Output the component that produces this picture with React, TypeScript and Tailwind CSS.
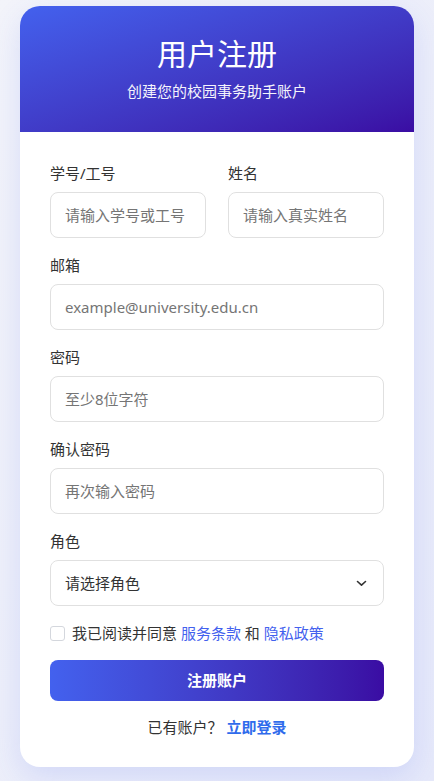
import React from "react";

const font = { fontFamily: '"Noto Sans", "Noto Sans CJK SC", sans-serif' };

function Field({ label, placeholder, type = "text" }: { label: string; placeholder: string; type?: string }) {
  return (
    <div className="flex flex-col">
      <label className="text-[15px] leading-[22px] text-[#333333] mb-2">{label}</label>
      <input
        type={type}
        placeholder={placeholder}
        className="h-[46px] w-full rounded-lg border border-[#e0e0e0] bg-white pl-[14px] pr-3 text-[15px] text-[#333] placeholder:text-[#757575] outline-none"
        style={font}
      />
    </div>
  );
}

export default function App() {
  return (
    <div className="min-h-screen w-full bg-gradient-to-br from-[#f3f4fa] to-[#e6e9fa] pt-[6px] pb-[13px]" style={font}>
      <div className="mx-[20px] overflow-hidden rounded-[20px] bg-white shadow-[0_10px_30px_rgba(67,97,238,0.15)]">
        <div className="bg-gradient-to-br from-[#4361ee] to-[#3a0ca3] pt-[30px] pb-[30px] text-center text-white">
          <h1 className="text-[30px] leading-[36px] font-normal">用户注册</h1>
          <p className="mt-2 text-[15px] leading-[22px] opacity-95">创建您的校园事务助手账户</p>
        </div>
        <div className="px-[30px] pt-[30px] pb-[30px] flex flex-col gap-4">
          <div className="grid grid-cols-2 gap-[22px]">
            <Field label="学号/工号" placeholder="请输入学号或工号" />
            <Field label="姓名" placeholder="请输入真实姓名" />
          </div>
          <Field label="邮箱" placeholder="example@university.edu.cn" type="email" />
          <Field label="密码" placeholder="至少8位字符" type="password" />
          <Field label="确认密码" placeholder="再次输入密码" type="password" />
          <div className="flex flex-col">
            <label className="text-[15px] leading-[22px] text-[#333333] mb-2">角色</label>
            <div className="relative h-[46px] w-full rounded-lg border border-[#e0e0e0] bg-white flex items-center pl-[14px] pr-[16px] justify-between">
              <span className="text-[15px] text-[#333]">请选择角色</span>
              <svg width="11" height="7" viewBox="0 0 11 7" fill="none">
                <path d="M1.5 1.5L5.5 5.2L9.5 1.5" stroke="#333" strokeWidth="1.6" strokeLinecap="round" strokeLinejoin="round" />
              </svg>
            </div>
          </div>
          <div className="flex items-center h-[22px]">
            <span className="inline-block h-[15px] w-[15px] rounded-[3px] border border-[#d4d7dd] bg-white" />
            <span className="ml-[7px] text-[15px] leading-[22px] text-[#333]">
              我已阅读并同意 <span className="text-[#4361ee]">服务条款</span> 和 <span className="text-[#4361ee]">隐私政策</span>
            </span>
          </div>
          <button className="h-[41px] w-full rounded-lg bg-gradient-to-r from-[#4361ee] to-[#3a0ca3] text-[15px] font-bold text-white" style={font}>
            注册账户
          </button>
          <div className="text-center text-[15px] leading-[20px] text-[#333]">
            已有账户？ <span className="font-bold text-[#2f6bec]">立即登录</span>
          </div>
        </div>
      </div>
    </div>
  );
}
